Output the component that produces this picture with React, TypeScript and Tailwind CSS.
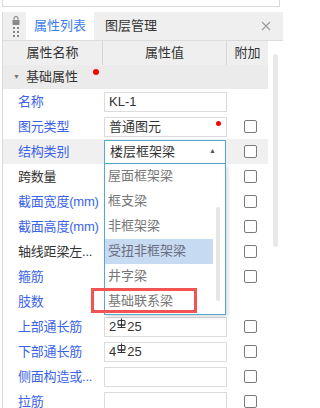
import type { ReactNode } from 'react';

const font = { fontFamily: '"Liberation Sans", "Noto Sans CJK SC", sans-serif' };

// 三级钢筋符号
function Steel() {
  return (
    <svg width="9" height="11" viewBox="0 0 9 11" className="mx-[1px] -translate-y-[3px]" fill="none" stroke="#333" strokeWidth="1.1">
      <rect x="1" y="2.5" width="7" height="4.5" rx="1" />
      <path d="M4.5 0.5V9.5M1 7H8M0.5 9.5H8.5" />
    </svg>
  );
}

function Check() {
  return <div className="h-[13px] w-[13px] rounded-[2px] border border-[#7a7a7a] bg-white" />;
}

function Box({ children, dot }: { children?: ReactNode; dot?: boolean }) {
  return (
    <div className="relative flex h-[20px] w-[123px] items-center border border-[#dcdcdc] bg-white pl-[4px] text-[13px] text-[#333]">
      {children}
      {dot && <span className="absolute right-[5px] top-[3px] h-[5px] w-[5px] rounded-full bg-[#ff0000]" />}
    </div>
  );
}

type Row = { label: string; blue?: boolean; value?: ReactNode; box?: boolean; dot?: boolean; check?: boolean };

const rows: Row[] = [
  { label: '名称', blue: true, box: true, value: 'KL-1' },
  { label: '图元类型', blue: true, box: true, value: '普通图元', dot: true, check: true },
  { label: '结构类别', blue: true, check: true },
  { label: '跨数量', check: true },
  { label: '截面宽度(mm)', blue: true, check: true },
  { label: '截面高度(mm)', blue: true, check: true },
  { label: '轴线距梁左...', check: true },
  { label: '箍筋', blue: true, check: true },
  { label: '肢数', blue: true },
  { label: '上部通长筋', blue: true, box: true, value: <>2<Steel />25</>, check: true },
  { label: '下部通长筋', blue: true, box: true, value: <>4<Steel />25</>, check: true },
  { label: '侧面构造或...', blue: true, box: true, check: true },
  { label: '拉筋', blue: true, box: true, check: true },
];

const options = ['屋面框架梁', '框支梁', '非框架梁', '受扭非框架梁', '井字梁', '基础联系梁'];

function Dropdown() {
  return (
    <div className="absolute left-[1px] top-[24px] z-10 w-[122px] border border-t-0 border-[#56a9cc] bg-white shadow-[2px_2px_4px_rgba(0,0,0,0.15)]">
      <div className="flex">
        <div className="flex w-[108px] flex-col">
          {options.map((o) => (
            <div
              key={o}
              className={`flex h-[25px] items-center pl-[3px] text-[13px] ${o === '受扭非框架梁' ? 'bg-[#c6dbf1] text-[#6b6b80]' : 'text-[#777]'}`}
            >
              {o}
            </div>
          ))}
        </div>
        <div className="ml-[3px] flex-1 pt-[43px]">
          <div className="h-[94px] w-[4px] rounded-full bg-[#e6e6e6]" />
        </div>
      </div>
    </div>
  );
}

export default function App() {
  return (
    <div className="h-[408px] w-[283px] overflow-hidden bg-white" style={font}>
      <div className="mx-[2px] h-[7px] w-[278px] border-x border-b border-[#dadada]" />
      <div className="mt-[5px] ml-[2px] w-[281px] border-l border-[#dadada]">
        {/* tab bar */}
        <div className="flex h-[28px] items-stretch bg-[#efefef]">
          <div className="flex w-[23px] flex-col items-center justify-center pl-[2px]">
            <svg width="10" height="22" viewBox="0 0 10 22" fill="#8a8a8a">
              <path d="M2.5 5V3.5a2.5 2.5 0 0 1 5 0V5h-1V3.5a1.5 1.5 0 0 0-3 0V5z" />
              <rect x="1.5" y="5" width="7" height="5" rx="0.5" />
              <rect x="2" y="12" width="2" height="2" />
              <rect x="6" y="12" width="2" height="2" />
              <rect x="2" y="16" width="2" height="2" />
              <rect x="6" y="16" width="2" height="2" />
              <rect x="2" y="20" width="2" height="2" />
              <rect x="6" y="20" width="2" height="2" />
            </svg>
          </div>
          <div className="flex w-[68px] items-center justify-center bg-white text-[13px] text-[#3c7ee6]">属性列表</div>
          <div className="flex items-center pl-[11px] text-[13px] text-[#333]">图层管理</div>
          <div className="flex-1" />
          <div className="flex w-[22px] items-center">
            <svg width="10" height="10" viewBox="0 0 10 10" stroke="#9a9a9a" strokeWidth="1.1">
              <path d="M1 1L9 9M9 1L1 9" />
            </svg>
          </div>
        </div>

        <div className="flex border-t border-[#dcdcdc]">
          <div className="w-[265px]">
            {/* column header */}
            <div className="flex h-[24px] bg-[#efefef] text-[13px] text-[#333]">
              <div className="flex w-[100px] items-center justify-center border-r border-[#d6d6d6]">属性名称</div>
              <div className="flex w-[124px] items-center justify-center border-r border-[#d6d6d6]">属性值</div>
              <div className="flex flex-1 items-center justify-center">附加</div>
            </div>
            {/* group */}
            <div className="relative flex h-[24px] items-center bg-[#ebebeb] text-[13px] text-[#333]">
              <span className="ml-[10px] mr-[6px] text-[7px] text-[#777]">▼</span>
              基础属性
              <span className="absolute left-[90px] top-[4px] h-[6px] w-[6px] rounded-full bg-[#ff0000]" />
            </div>
            {rows.map((r) => (
              <div key={r.label} className={`flex h-[25px] items-center ${r.label === '结构类别' ? 'bg-[#f0f0f0]' : ''}`}>
                <div className={`w-[100px] pl-[15px] text-[13px] whitespace-nowrap tracking-[-0.2px] ${r.blue ? 'text-[#3a63e8]' : 'text-[#333]'}`}>{r.label}</div>
                <div className="relative w-[124px] pl-[1px]">
                  {r.box && <Box dot={r.dot}>{r.value}</Box>}
                  {r.label === '结构类别' && (
                    <>
                      <div className="flex h-[24px] w-[122px] items-center justify-between border border-[#56a9cc] bg-white pl-[5px] pr-[9px] text-[13px] text-[#333]">
                        楼层框架梁
                        <span className="text-[7px] text-[#555]">▲</span>
                      </div>
                      <Dropdown />
                    </>
                  )}
                </div>
                <div className="flex flex-1 justify-center pl-[6px]">{r.check && <Check />}</div>
              </div>
            ))}
          </div>
          <div className="w-[15px] bg-white pl-[5px] pt-[13px]">
            <div className="h-[193px] w-[5px] rounded-full bg-[#e8e8e8]" />
          </div>
        </div>
      </div>
      {/* 标注框 */}
      <div className="pointer-events-none absolute left-[91px] top-[288px] z-20 h-[25px] w-[106px] border-[3px] border-[#f25454]" />
    </div>
  );
}
